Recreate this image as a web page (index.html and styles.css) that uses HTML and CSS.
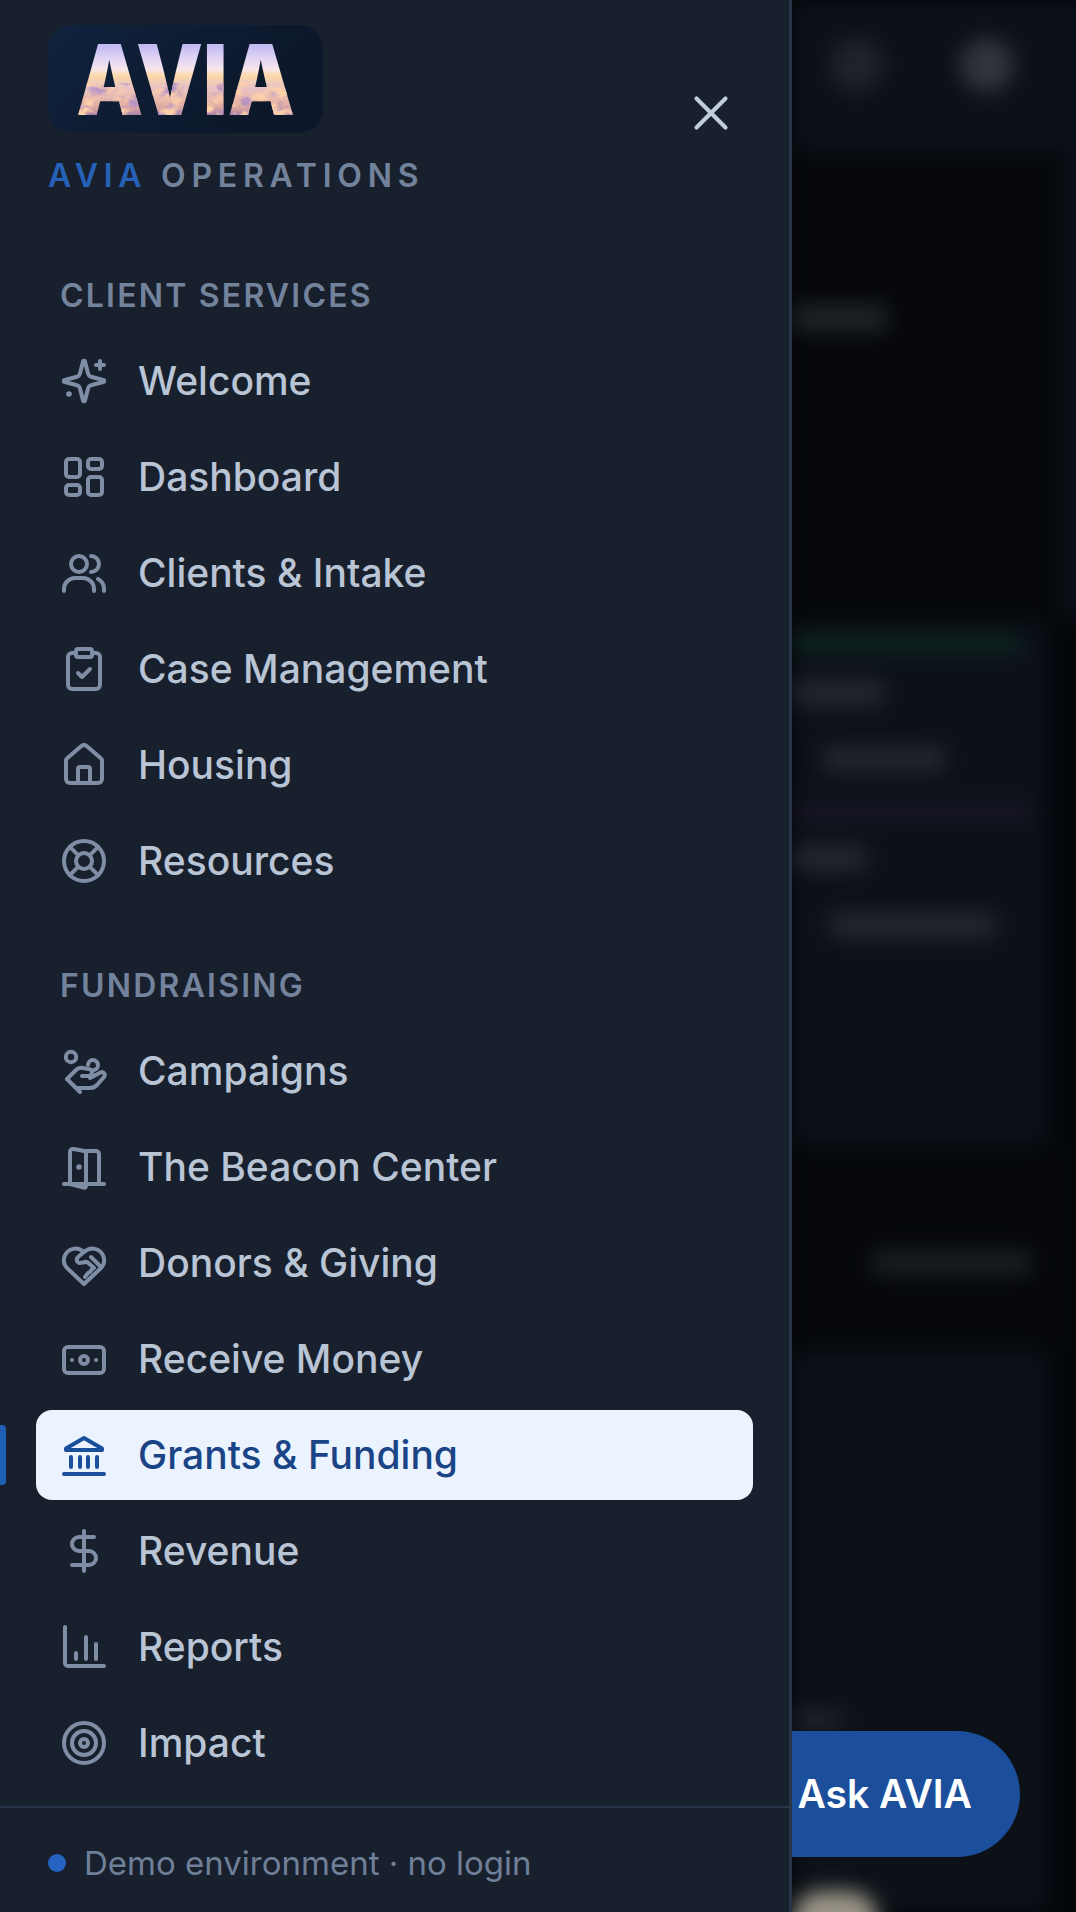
FILE: index.html
```html
<!DOCTYPE html>
<html lang="en">
<head>
  <meta charset="UTF-8">
  <meta name="viewport" content="width=device-width, initial-scale=1.0">
  <title>AVIA Operations</title>
  <link rel="stylesheet" href="styles.css">
</head>
<body>
<!-- cloud texture laid over the logo letters -->
<svg class="defs" aria-hidden="true">
  <filter id="clouds" x="0" y="0" width="100%" height="100%" color-interpolation-filters="sRGB">
    <feTurbulence type="fractalNoise" baseFrequency="0.05 0.09" numOctaves="4" seed="7" result="noise"/>
    <feColorMatrix in="noise" values="0 0 0 0 1  0 0 0 0 0.82  0 0 0 0 0.66  4 0 0 0 -1.9"/>
    <feComposite in2="SourceAlpha" operator="in" result="light"/>
    <feColorMatrix in="noise" values="0 0 0 0 0.72  0 0 0 0 0.58  0 0 0 0 0.76  0 4 0 0 -2"/>
    <feComposite in2="SourceAlpha" operator="in" result="shade"/>
    <feMerge result="puffs">
      <feMergeNode in="shade"/>
      <feMergeNode in="light"/>
    </feMerge>
    <!-- keep the sky above the horizon clean -->
    <feFlood flood-color="#fff" x="0" y="52" width="400" height="80" result="band"/>
    <feComposite in="puffs" in2="band" operator="in" result="low"/>
    <feMerge>
      <feMergeNode in="SourceGraphic"/>
      <feMergeNode in="low"/>
    </feMerge>
  </filter>
</svg>

<div class="page">
  <div class="page-blur">
    <div class="topbar">
      <span class="round-btn"></span>
      <span class="round-btn lighter"></span>
    </div>
    <div class="hero">
      <div class="hero-line"></div>
    </div>
    <div class="panel">
      <div class="accent green"></div>
      <div class="ghost g1"></div>
      <div class="ghost g2"></div>
      <div class="accent purple"></div>
      <div class="ghost g3"></div>
      <div class="ghost g4"></div>
    </div>
    <div class="band">
      <div class="ghost faint"></div>
    </div>
    <div class="panel low">
      <div class="ghost low-line"></div>
      <div class="blob"></div>
    </div>
  </div>
  <button class="ask-btn">Ask AVIA</button>
</div>

<aside class="drawer">
  <header class="drawer-head">
    <div class="brand">
      <div class="logo"><span class="logo-text">AVIA</span></div>
      <div class="brand-name"><span class="blue">AVIA</span> OPERATIONS</div>
    </div>
    <svg class="close" viewBox="0 0 24 24"><path d="M18 6 6 18M6 6l12 12"/></svg>
  </header>

  <nav class="nav">
    <div class="nav-label">CLIENT SERVICES</div>
    <a class="nav-row">
      <svg viewBox="0 0 24 24"><path d="M9.9 15.5a2 2 0 0 0-1.400-1.400l-6.100-1.600a.5.5 0 0 1 0-1L8.500 9.900a2 2 0 0 0 1.400-1.400l1.600-6.100a.5.5 0 0 1 1 0l1.600 6.100a2 2 0 0 0 1.400 1.400l6.100 1.600a.5.5 0 0 1 0 1l-6.100 1.600a2 2 0 0 0-1.400 1.400l-1.600 6.100a.5.5 0 0 1-1 0z"/><path d="M20 2v4M22 4h-4"/><path class="heavy" d="M4.500 18.500h.01"/></svg>
      Welcome
    </a>
    <a class="nav-row">
      <svg viewBox="0 0 24 24"><rect x="3" y="3" width="7" height="9" rx="1.500"/><rect x="14" y="3" width="7" height="5" rx="1.500"/><rect x="14" y="12" width="7" height="9" rx="1.500"/><rect x="3" y="16" width="7" height="5" rx="1.500"/></svg>
      Dashboard
    </a>
    <a class="nav-row">
      <svg viewBox="0 0 24 24"><circle cx="9.500" cy="7.500" r="4"/><path d="M2 21v-1a5.500 5.500 0 0 1 5.500-5.500h4a5.500 5.500 0 0 1 5.500 5.500v1"/><path d="M15.500 3.500a4 4 0 0 1 0 8M19 15a5.500 5.500 0 0 1 3 5v1"/></svg>
      Clients &amp; Intake
    </a>
    <a class="nav-row">
      <svg viewBox="0 0 24 24"><rect x="8" y="2" width="8" height="4" rx="1"/><path d="M16 4h2a2 2 0 0 1 2 2v14a2 2 0 0 1-2 2H6a2 2 0 0 1-2-2V6a2 2 0 0 1 2-2h2"/><path d="m9 14 2 2 4-4"/></svg>
      Case Management
    </a>
    <a class="nav-row">
      <svg viewBox="0 0 24 24"><path d="M15 21v-7a1 1 0 0 0-1-1h-4a1 1 0 0 0-1 1v7"/><path d="M3 10a2 2 0 0 1 .7-1.500l7-6a2 2 0 0 1 2.600 0l7 6A2 2 0 0 1 21 10v9a2 2 0 0 1-2 2H5a2 2 0 0 1-2-2z"/></svg>
      Housing
    </a>
    <a class="nav-row">
      <svg viewBox="0 0 24 24"><circle cx="12" cy="12" r="10"/><circle cx="12" cy="12" r="4"/><path d="m4.900 4.900 4.300 4.300M14.800 9.200l4.300-4.300M14.800 14.800l4.300 4.300M9.200 14.800l-4.300 4.300"/></svg>
      Resources
    </a>

    <div class="nav-label second">FUNDRAISING</div>
    <a class="nav-row">
      <svg viewBox="0 0 24 24"><circle cx="5.500" cy="5" r="2.600"/><path d="M14 9a2.500 2.500 0 1 1 3 2.500"/><path d="M3.500 16 8 11.500c1-1 2.200-1.300 3.500-1l3.500.7c1.500.4 1.200 3-.5 3.300H11"/><path d="M9 20.500h6c1.500 0 2.500-.5 3.500-1.500l3.500-4c1-1.200-.3-3-1.800-2.300L15 15.500"/><path d="m3.500 16 6.500 6.500"/></svg>
      Campaigns
    </a>
    <a class="nav-row">
      <svg viewBox="0 0 24 24"><path d="M2 20.500h20"/><path d="M5 20.500V4.500c0-1 .8-1.700 1.800-1.500l5.200 1c.6.100 1 .6 1 1.200V21.500c0 .7-.5 1-1.200.8L5 20.500"/><path d="M13 4h5a1.500 1.500 0 0 1 1.500 1.500v15"/><path class="heavy" d="M9.500 12h.01"/></svg>
      The Beacon Center
    </a>
    <a class="nav-row">
      <svg viewBox="0 0 24 24"><path d="M12 22.500 3.500 14.500C1 12 1.500 7.500 5 5.500c2.500-1.300 5-.7 7 1 2-1.700 4.500-2.300 7-1 3.500 2 4 6.500 1.500 9z"/><path d="M12 6.500 9 9c-1 1-.8 2.500.5 3l2-.2c1-.5 2-.5 2.700.2l2.800 2.500"/><path d="m15.500 9 4.500 4.500M16.500 14.500 15 16.500M14 17l-1.500 2"/></svg>
      Donors &amp; Giving
    </a>
    <a class="nav-row">
      <svg viewBox="0 0 24 24"><rect x="2" y="6" width="20" height="13" rx="2"/><circle cx="12" cy="12.500" r="2"/><path d="M6 12.500h.01M18 12.500h.01"/></svg>
      Receive Money
    </a>
    <a class="nav-row active">
      <svg viewBox="0 0 24 24"><path d="M3 9.500V8.700L12 3.500l9 5.200v.8zM2 21.500h20"/><path d="M5.500 13v5M10 13v5M14 13v5M18.500 13v5"/></svg>
      Grants &amp; Funding
    </a>
    <a class="nav-row">
      <svg viewBox="0 0 24 24"><path d="M12 2v20M17 5H9.500a3.500 3.500 0 0 0 0 7h5a3.500 3.500 0 0 1 0 7H6"/></svg>
      Revenue
    </a>
    <a class="nav-row">
      <svg viewBox="0 0 24 24"><path d="M2.500 2v18a1.500 1.500 0 0 0 1.500 1.500h18"/><path d="M8 15v3M13 7v11M18 10.500V18"/></svg>
      Reports
    </a>
    <a class="nav-row">
      <svg viewBox="0 0 24 24"><circle cx="12" cy="12" r="10"/><circle cx="12" cy="12" r="6"/><circle cx="12" cy="12" r="2"/></svg>
      Impact
    </a>
  </nav>

  <footer class="drawer-foot">
    <span class="dot"></span>
    Demo environment · no login
  </footer>
</aside>
</body>
</html>
```

FILE: styles.css
```css
* {
  box-sizing: border-box;
}

body {
  margin: 0;
  height: 1912px;
  overflow: hidden;
  position: relative;
  background-color: #04060a;
  font-family: Inter, "Liberation Sans", sans-serif;
}

.defs {
  position: absolute;
  width: 0;
  height: 0;
}

/* page behind the drawer, blurred out */
.page {
  height: 100%;
  position: relative;
  overflow: hidden;
}

.page-blur {
  height: 100%;
  padding-left: 792px;
  filter: blur(10px);
}

.topbar {
  height: 152px;
  margin-right: -30px;
  display: flex;
  gap: 76px;
  padding: 38px 0 0 38px;
  background-color: #0c1118;
}

.round-btn {
  width: 54px;
  height: 54px;
  border-radius: 50%;
  background-color: #1e2229;
}

.round-btn.lighter {
  background-color: #30343c;
}

.hero {
  height: 470px;
  margin-right: 15px;
  padding-top: 152px;
  background-color: #05070b;
  box-shadow: 40px 0 0 #0b0f15;
}

.hero-line {
  width: 95px;
  height: 28px;
  background-color: #1f2226;
}

.panel {
  height: 523px;
  margin-right: 28px;
  padding-top: 15px;
  background-color: #0c1118;
}

.accent {
  height: 14px;
}

.accent.green {
  width: 227px;
  background-color: #0d2a22;
}

.accent.purple {
  width: 239px;
  margin-top: 32px;
  background-color: #1a1628;
}

.ghost {
  height: 26px;
  background-color: #22262e;
}

.g1 {
  width: 92px;
  margin-top: 29px;
}

.g2 {
  width: 122px;
  margin: 40px 0 0 31px;
}

.g3 {
  width: 74px;
  margin-top: 27px;
}

.g4 {
  width: 165px;
  margin: 41px 0 0 38px;
}

.band {
  height: 206px;
  padding: 105px 0 0 80px;
  background-color: #05070b;
}

.ghost.faint {
  width: 159px;
  background-color: #191c21;
}

.panel.low {
  height: 561px;
  padding-top: 361px;
}

.ghost.low-line {
  width: 50px;
  height: 16px;
  background-color: #22262c;
}

.blob {
  width: 86px;
  height: 60px;
  border-radius: 30px;
  margin-top: 163px;
  background-color: #9a9586;
}

/* floating button, sits under the drawer */
.ask-btn {
  position: absolute;
  top: 1731px;
  left: 640px;
  width: 380px;
  height: 126px;
  padding: 0 48px 2px 0;
  border: 0;
  border-radius: 63px;
  background-color: #1b4f9c;
  color: #fff;
  font-family: Inter, sans-serif;
  font-size: 39px;
  font-weight: 600;
  text-align: right;
}

/* drawer */
.drawer {
  position: absolute;
  top: 0;
  left: 0;
  width: 792px;
  height: 1912px;
  display: flex;
  flex-direction: column;
  background-color: #18202e;
  border-right: 3px solid #2a3648;
}

.drawer-head {
  height: 212px;
  padding: 25px 0 0 48px;
  display: flex;
  justify-content: space-between;
}

.logo {
  width: 275px;
  height: 108px;
  border-radius: 24px;
  display: flex;
  align-items: center;
  justify-content: center;
  background: linear-gradient(135deg, #10233e, #0c172a 75%);
}

.logo-text {
  font-size: 97px;
  font-weight: 900;
  line-height: 1;
  transform: scaleX(0.87);
  color: transparent;
  background: linear-gradient(to bottom, #c3bcf2 16%, #e0d4f6 28%, #f9e6ea 40%, #fcd9a8 46%, #e7c2c6 58%, #e9b9a8 72%, #d9a4a0 80%, #a983a8 86%);
  -webkit-background-clip: text;
  background-clip: text;
  filter: url(#clouds);
}

.brand-name {
  margin-top: 23px;
  font-size: 32px;
  font-weight: 600;
  letter-spacing: 5.75px;
  line-height: 40px;
  color: #74839c;
}

.blue {
  color: #2562b7;
}

.close {
  width: 58px;
  height: 58px;
  margin: 59px 49px 0 0;
  fill: none;
  stroke: #c3cedc;
  stroke-width: 1.7;
  stroke-linecap: round;
}

.nav {
  flex: 1;
  padding: 0 36px;
  display: flex;
  flex-direction: column;
  gap: 6px;
  overflow: hidden;
}

.nav-label {
  height: 46px;
  padding-left: 24px;
  margin-top: 61px;
  margin-bottom: 11px;
  font-size: 32px;
  font-weight: 600;
  line-height: 46px;
  letter-spacing: 2.2px;
  color: #74839c;
}

.nav-label.second {
  margin-top: 51px;
}

.nav-row {
  height: 90px;
  flex-shrink: 0;
  padding: 0 0 2px 24px;
  display: flex;
  align-items: center;
  gap: 30px;
  border-radius: 16px;
  position: relative;
  font-size: 39px;
  font-weight: 500;
  color: #b9c4d5;
}

.nav-row svg {
  width: 48px;
  height: 48px;
  flex-shrink: 0;
  margin-top: 2px;
  fill: none;
  stroke: #7f8da5;
  stroke-width: 2;
  stroke-linecap: round;
  stroke-linejoin: round;
}

.nav-row svg .heavy {
  stroke-width: 2.800;
}

.nav-row.active {
  background-color: #ebf3fe;
  color: #1a4486;
}

.nav-row.active svg {
  stroke: #1b4f9c;
}

/* little bar at the window edge */
.nav-row.active::before {
  content: "";
  position: absolute;
  left: -36px;
  top: 15px;
  width: 6px;
  height: 60px;
  border-radius: 0 4px 4px 0;
  background-color: #1f5fb8;
}

.drawer-foot {
  height: 106px;
  padding: 6px 0 0 48px;
  display: flex;
  align-items: center;
  gap: 18px;
  border-top: 2px solid #28344a;
  font-size: 33px;
  color: #6f7f98;
}

.dot {
  width: 18px;
  height: 18px;
  border-radius: 50%;
  background-color: #2563c0;
}
```
